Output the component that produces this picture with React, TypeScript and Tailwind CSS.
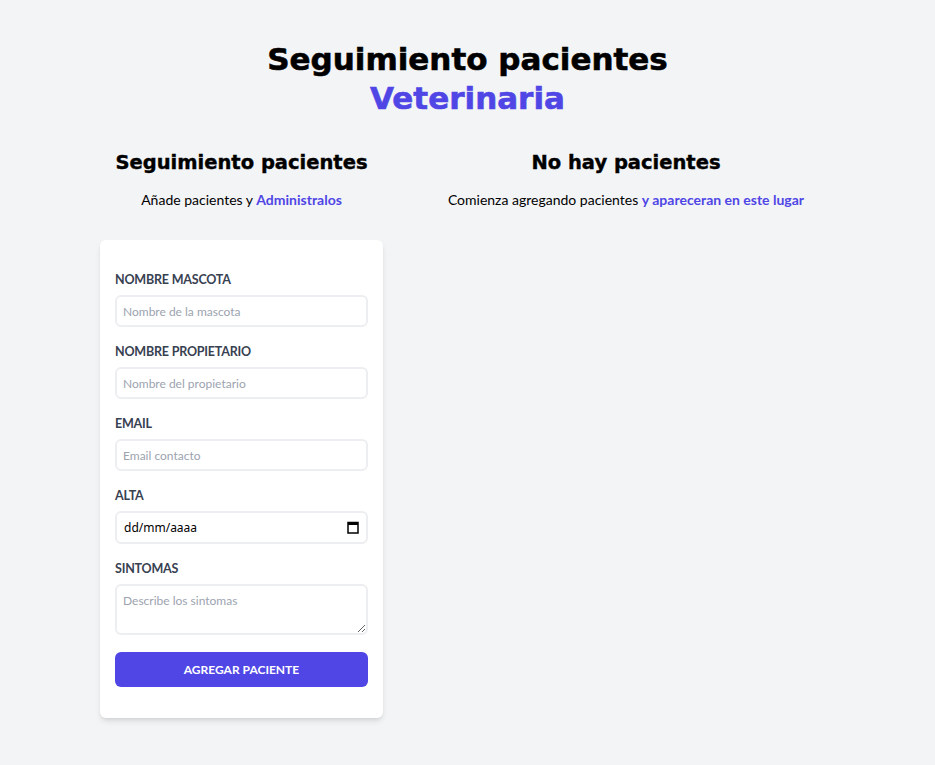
import React from "react";

const font = { fontFamily: "Lato, 'Noto Sans', sans-serif" };
const heavy = { fontFamily: "'DejaVu Sans', 'Noto Sans', sans-serif" };

export default function App() {
  return (
    <div className="min-h-[765px] bg-[#f3f4f6] pt-[40px]" style={font}>
      <h1 className="text-center text-[31px] font-bold leading-[39px] text-black [-webkit-text-stroke:0.6px]" style={heavy}>
        Seguimiento pacientes
        <span className="block text-[#4f46e5]">Veterinaria</span>
      </h1>
      <div className="mt-[30px] flex">
        <div className="ml-[100px] w-[283px]">
          <h2 className="text-center text-[19.5px] font-bold leading-[30px] text-black [-webkit-text-stroke:0.4px]" style={heavy}>Seguimiento pacientes</h2>
          <p className="mt-[11px] text-center text-[14px] text-black">
            Añade pacientes y <span className="font-bold text-[#4f46e5]">Administralos</span>
          </p>
          <form className="mt-[30px] rounded-md bg-white px-[15px] pt-[32px] pb-[31px] shadow-md">
            <Field label="NOMBRE MASCOTA">
              <input className="block h-[32px] w-full rounded-md border-2 border-[#eceef1] px-[6px] text-[12px] placeholder:text-[#9ca3af] outline-none" placeholder="Nombre de la mascota" />
            </Field>
            <Field label="NOMBRE PROPIETARIO">
              <input className="block h-[32px] w-full rounded-md border-2 border-[#eceef1] px-[6px] text-[12px] placeholder:text-[#9ca3af] outline-none" placeholder="Nombre del propietario" />
            </Field>
            <Field label="EMAIL">
              <input type="email" className="block h-[32px] w-full rounded-md border-2 border-[#eceef1] px-[6px] text-[12px] placeholder:text-[#9ca3af] outline-none" placeholder="Email contacto" />
            </Field>
            <Field label="ALTA">
              <div className="flex h-[33px] w-full items-center justify-between rounded-md border-2 border-[#eceef1] px-[7px] text-black">
                <span className="text-[12px]" style={{ fontFamily: "'Noto Sans', sans-serif" }}>dd/mm/aaaa</span>
                <svg width="12" height="13" viewBox="0 0 12 13" fill="none">
                  <rect x="1" y="1.5" width="10" height="10.5" stroke="black" strokeWidth="1.5" />
                  <rect x="1" y="1.5" width="10" height="2.5" fill="black" />
                </svg>
              </div>
            </Field>
            <Field label="SINTOMAS">
              <textarea className="block h-[51px] w-full resize-y rounded-md border-2 border-[#eceef1] px-[6px] pt-[7px] text-[12px] leading-[16px] placeholder:text-[#9ca3af] outline-none" placeholder="Describe los sintomas" />
            </Field>
            <button type="button" className="mt-[9px] block h-[35px] w-full rounded-md bg-[#4f46e5] text-[12px] font-bold text-white">
              AGREGAR PACIENTE
            </button>
          </form>
        </div>
        <div className="w-[486px] text-center">
          <h2 className="text-[19.5px] font-bold leading-[30px] text-black [-webkit-text-stroke:0.4px]" style={heavy}>No hay pacientes</h2>
          <p className="mt-[11px] text-[14px] text-black">
            Comienza agregando pacientes <span className="font-bold text-[#4f46e5]">y apareceran en este lugar</span>
          </p>
        </div>
      </div>
    </div>
  );
}

function Field({ label, children }: { label: string; children: React.ReactNode }) {
  return (
    <div className="mb-[17px]">
      <label className="mb-[7px] block text-[12.5px] font-bold leading-[16px] tracking-[-0.2px] text-[#374151]">{label}</label>
      {children}
    </div>
  );
}
